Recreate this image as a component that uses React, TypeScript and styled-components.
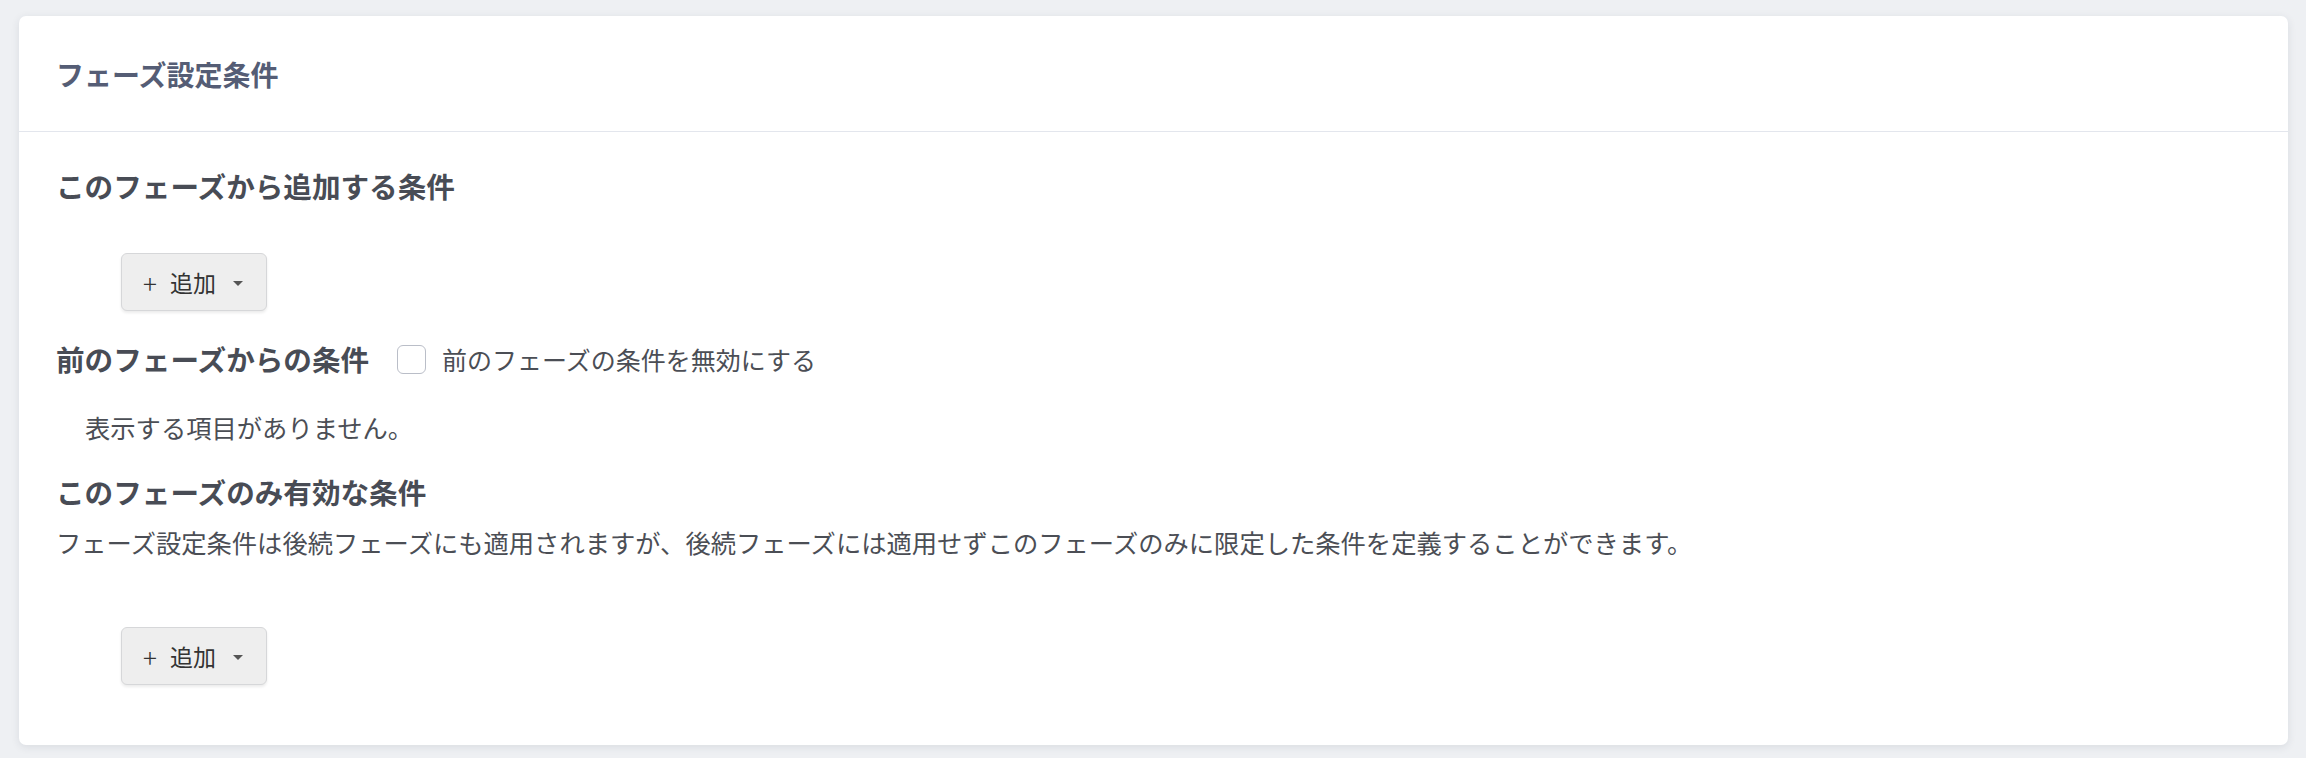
import styled, { createGlobalStyle } from 'styled-components';

const GlobalStyle = createGlobalStyle`
  html, body {
    margin: 0;
    padding: 0;
    background: #eef0f3;
    font-family: "Noto Sans CJK JP", "Noto Sans", sans-serif;
  }
`;

const Page = styled.div`
  padding: 16px 18px 15px 19px;
`;

const Card = styled.section`
  background: #ffffff;
  border-radius: 7px;
  box-shadow: 0 2px 8px rgba(40, 50, 70, 0.1);
`;

const CardHeader = styled.header`
  height: 115px;
  display: flex;
  align-items: center;
  padding: 0 37px;
  border-bottom: 1px solid #e3e6ed;
`;

const CardTitle = styled.h2`
  margin: 0;
  font-size: 28px;
  font-weight: 700;
  color: #555d75;
`;

const CardBody = styled.div`
  padding: 34px 37px 60px 37px;
  display: flex;
  flex-direction: column;
`;

const SectionTitle = styled.h3<{ $gap?: number }>`
  margin: ${p => p.$gap ?? 0}px 0 0 0;
  font-size: 28.6px;
  line-height: 40px;
  font-weight: 700;
  color: #484c55;
`;

const TitleRow = styled.div<{ $gap?: number }>`
  display: flex;
  align-items: center;
  margin-top: ${p => p.$gap ?? 0}px;
  height: 40px;
`;

const CheckLabel = styled.label`
  display: flex;
  align-items: center;
  gap: 16px;
  margin-left: 28px;
  font-size: 25px;
  color: #4b4e55;
`;

const Checkbox = styled.span`
  width: 27px;
  height: 27px;
  border: 1.5px solid #babec8;
  border-radius: 6px;
  background: #fff;
`;

const Text = styled.p<{ $gap?: number; $indent?: number }>`
  margin: ${p => p.$gap ?? 0}px 0 0 ${p => p.$indent ?? 0}px;
  font-size: 25.3px;
  line-height: 36px;
  color: #4b4e55;
`;

const AddButton = styled.button<{ $gap: number }>`
  align-self: flex-start;
  margin: ${p => p.$gap}px 0 0 65px;
  height: 58px;
  box-sizing: border-box;
  display: flex;
  align-items: center;
  padding: 0 23px 0 21px;
  background: #eeeeee;
  border: 1px solid #d6d7d9;
  border-radius: 6px;
  box-shadow: 0 2px 3px rgba(0, 0, 0, 0.08);
  font-family: inherit;
  font-size: 23px;
  color: #333;
`;

const Plus = styled.span`
  font-size: 26px;
  font-weight: 300;
  margin-right: 13px;
`;

const Caret = styled.span`
  margin-left: 17px;
  width: 0;
  height: 0;
  border-left: 5px solid transparent;
  border-right: 5px solid transparent;
  border-top: 5px solid #555;
  margin-top: 3px;
`;

function Add({ gap }: { gap: number }) {
  return (
    <AddButton $gap={gap}>
      <Plus>+</Plus>
      追加
      <Caret />
    </AddButton>
  );
}

export default function App() {
  return (
    <>
      <GlobalStyle />
      <Page>
        <Card>
          <CardHeader>
            <CardTitle>フェーズ設定条件</CardTitle>
          </CardHeader>
          <CardBody>
            <SectionTitle>このフェーズから追加する条件</SectionTitle>
            <Add gap={47} />
            <TitleRow $gap={28}>
              <SectionTitle>前のフェーズからの条件</SectionTitle>
              <CheckLabel>
                <Checkbox />
                前のフェーズの条件を無効にする
              </CheckLabel>
            </TitleRow>
            <Text $gap={30} $indent={29}>表示する項目がありません。</Text>
            <SectionTitle $gap={27}>このフェーズのみ有効な条件</SectionTitle>
            <Text $gap={12}>
              フェーズ設定条件は後続フェーズにも適用されますが、後続フェーズには適用せずこのフェーズのみに限定した条件を定義することができます。
            </Text>
            <Add gap={67} />
          </CardBody>
        </Card>
      </Page>
    </>
  );
}
